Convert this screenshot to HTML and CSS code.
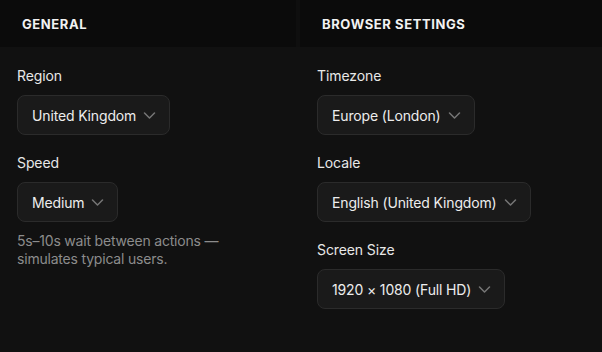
FILE: index.html
```html
<!DOCTYPE html>
<html lang="en">
<head>
    <meta charset="UTF-8">
    <title>Settings</title>
    <meta name="viewport" content="width=device-width">
    <link rel="stylesheet" href="styles.css">
</head>
<body>
    <div class="panels">
        <section class="panel panel-left">
            <h2 class="panel-title">General</h2>
            <div class="panel-body">
                <div class="field">
                    <label>Region</label>
                    <div class="select">United Kingdom
                        <svg class="chev" viewBox="0 0 12 7"><path d="M1 1l5 5 5-5"/></svg>
                    </div>
                </div>
                <div class="field">
                    <label>Speed</label>
                    <div class="select">Medium
                        <svg class="chev" viewBox="0 0 12 7"><path d="M1 1l5 5 5-5"/></svg>
                    </div>
                    <p class="hint">5s–10s wait between actions —<br>simulates typical users.</p>
                </div>
            </div>
        </section>
        <section class="panel">
            <h2 class="panel-title">Browser Settings</h2>
            <div class="panel-body">
                <div class="field">
                    <label>Timezone</label>
                    <div class="select">Europe (London)
                        <svg class="chev" viewBox="0 0 12 7"><path d="M1 1l5 5 5-5"/></svg>
                    </div>
                </div>
                <div class="field">
                    <label>Locale</label>
                    <div class="select">English (United Kingdom)
                        <svg class="chev" viewBox="0 0 12 7"><path d="M1 1l5 5 5-5"/></svg>
                    </div>
                </div>
                <div class="field">
                    <label>Screen Size</label>
                    <div class="select">1920 × 1080 (Full HD)
                        <svg class="chev" viewBox="0 0 12 7"><path d="M1 1l5 5 5-5"/></svg>
                    </div>
                </div>
            </div>
        </section>
    </div>
</body>
</html>
```

FILE: styles.css
```css
html, body{
    margin: 0;
    height: 100%;
    background: #111111;
    font-family: Inter, "Noto Sans", sans-serif;
    color: #ececec;
}
.panels{
    display: grid;
    grid-template-columns: 300px 1fr;
    height: 100%;
}
.panel-title{
    margin: 0;
    height: 47px;
    box-sizing: border-box;
    padding: 0 22px;
    display: flex;
    align-items: center;
    background: #0b0b0b;
    font-size: 13px;
    font-weight: 700;
    letter-spacing: 0.6px;
    text-transform: uppercase;
    color: #f2f2f2;
}
.panel-left .panel-title{
    border-right: 4px solid #0f0f0f;
}
.panel-body{
    padding: 19px 17px;
    display: flex;
    flex-direction: column;
    gap: 18px;
}
.field{
    display: flex;
    flex-direction: column;
    align-items: flex-start;
}
.field label{
    font-size: 14px;
    line-height: 20px;
    letter-spacing: -0.1px;
    margin-bottom: 9px;
    color: #e8e8e8;
}
.select{
    height: 40px;
    box-sizing: border-box;
    display: flex;
    align-items: center;
    gap: 7px;
    padding: 0 13px 0 14px;
    background: #1a1a1a;
    border: 1px solid #2b2b2b;
    border-radius: 8px;
    font-size: 14px;
    letter-spacing: -0.15px;
    color: #ededed;
}
.chev{
    width: 13px;
    height: 7px;
    fill: none;
    stroke: #767676;
    stroke-width: 1.5;
    stroke-linecap: round;
    stroke-linejoin: round;
}
.hint{
    margin: 10px 0 0;
    font-size: 14px;
    line-height: 18px;
    letter-spacing: -0.2px;
    color: #8c8c8c;
}
```
